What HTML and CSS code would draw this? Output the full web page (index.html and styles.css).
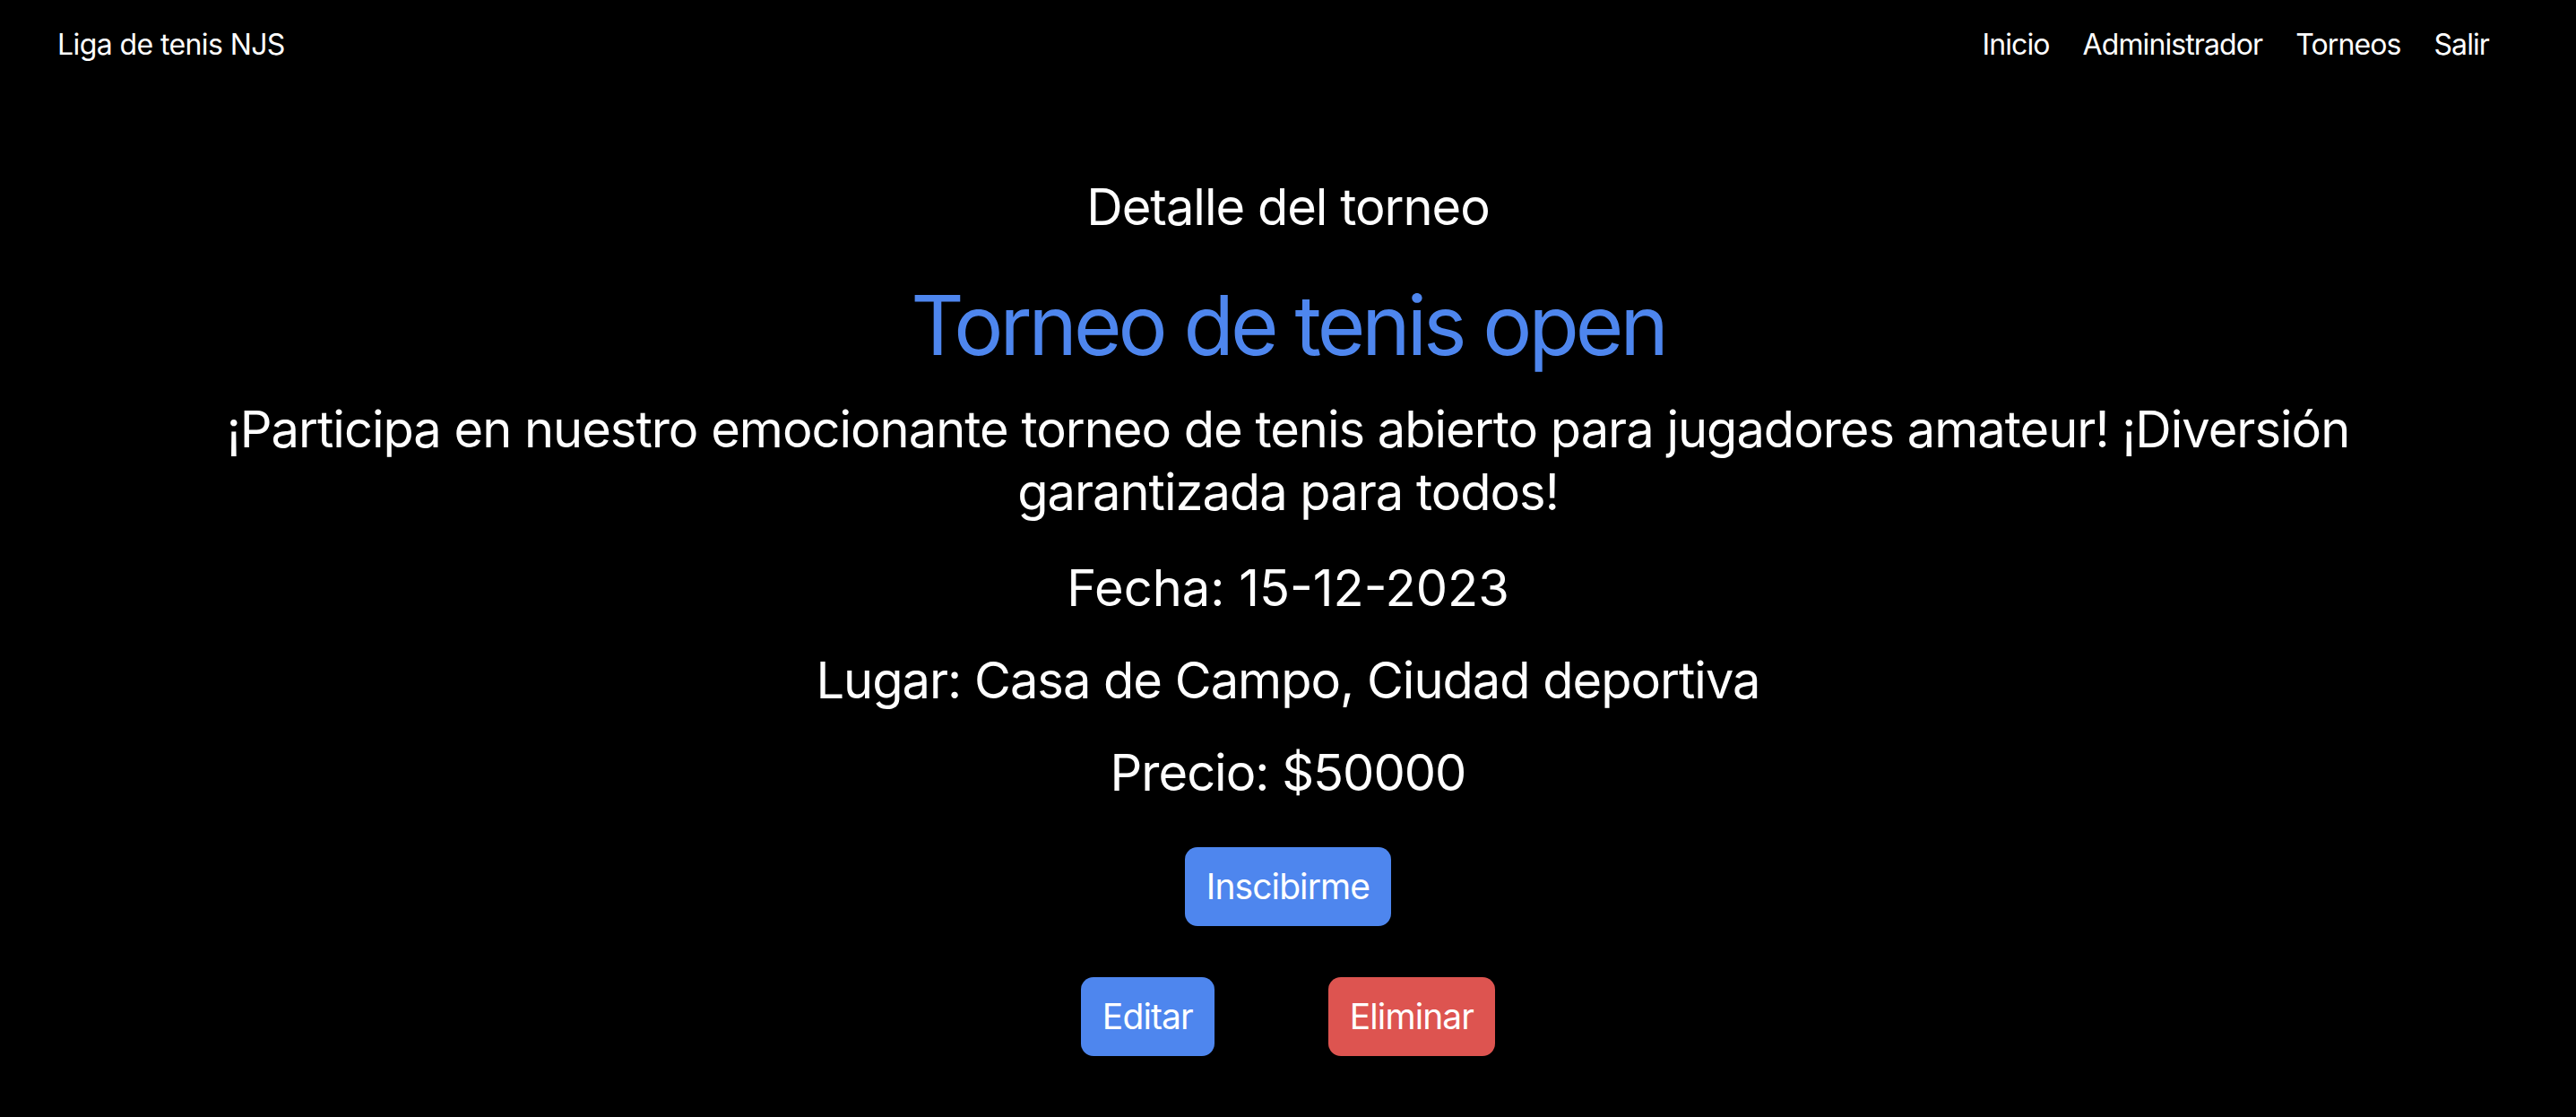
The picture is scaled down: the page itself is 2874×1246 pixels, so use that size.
FILE: index.html
```html
<!DOCTYPE html>
<html lang="es">
<head>
<meta charset="utf-8">
<title>Detalle del torneo</title>
<link rel="stylesheet" href="styles.css">
</head>
<body>
<nav class="navbar">
  <a class="brand" href="#">Liga de tenis NJS</a>
  <ul class="nav-links">
    <li><a href="#">Inicio</a></li>
    <li><a href="#">Administrador</a></li>
    <li><a href="#">Torneos</a></li>
    <li><a href="#">Salir</a></li>
  </ul>
</nav>
<main class="detail">
  <h3 class="detail-heading">Detalle del torneo</h3>
  <h1 class="detail-title">Torneo de tenis open</h1>
  <p class="detail-text">¡Participa en nuestro emocionante torneo de tenis abierto para jugadores amateur! ¡Diversión garantizada para todos!</p>
  <p class="detail-text detail-date">Fecha: 15-12-2023</p>
  <p class="detail-text">Lugar: Casa de Campo, Ciudad deportiva</p>
  <p class="detail-text">Precio: $50000</p>
  <div class="actions">
    <button class="btn btn-primary">Inscibirme</button>
  </div>
  <div class="actions actions-pair">
    <button class="btn btn-primary">Editar</button>
    <button class="btn btn-danger">Eliminar</button>
  </div>
</main>
</body>
</html>
```

FILE: styles.css
```css
* {
  box-sizing: border-box;
}

html, body {
  margin: 0;
  padding: 0;
  background: #000;
  color: #fff;
  font-family: Inter, "Noto Sans", "Liberation Sans", sans-serif;
}

body {
  min-height: 1246px;
}

a {
  color: #fff;
  text-decoration: none;
}

.navbar {
  display: flex;
  align-items: center;
  justify-content: space-between;
  height: 100px;
  padding: 0 97px 0 64px;
}

.brand {
  font-size: 32px;
  line-height: 48px;
  letter-spacing: -0.6px;
}

.nav-links {
  list-style: none;
  display: flex;
  gap: 37px;
  margin: 0;
  padding: 0;
}

.nav-links a {
  font-size: 32px;
  line-height: 48px;
  letter-spacing: -0.9px;
}

.detail {
  max-width: 2640px;
  margin: 0 auto;
  padding: 0 24px;
  text-align: center;
}

.detail-heading {
  margin: 97px 0 0;
  font-size: 56px;
  line-height: 68px;
  font-weight: 400;
  letter-spacing: -1px;
}

.detail-title {
  margin: 41px 0 0;
  font-size: 92px;
  line-height: 114px;
  font-weight: 400;
  color: #4e86ee;
  letter-spacing: -4px;
}

.detail-text {
  margin: 33px 0 0;
  font-size: 56px;
  line-height: 70px;
  font-weight: 400;
  letter-spacing: -1px;
}

.detail-title + .detail-text {
  margin-top: 24px;
}

.detail-text.detail-date {
  margin-top: 37px;
  letter-spacing: 0;
}

.actions {
  display: flex;
  justify-content: center;
  margin-top: 48px;
}

.actions-pair {
  gap: 127px;
  margin-top: 57px;
}

.btn {
  height: 88px;
  padding: 0 24px;
  border: 0;
  border-radius: 14px;
  font-family: inherit;
  font-size: 39px;
  line-height: 88px;
  letter-spacing: -0.9px;
  color: #fff;
  cursor: pointer;
}

.btn-primary {
  background: #4e86ee;
}

.btn-danger {
  background: #dd5450;
}
```
